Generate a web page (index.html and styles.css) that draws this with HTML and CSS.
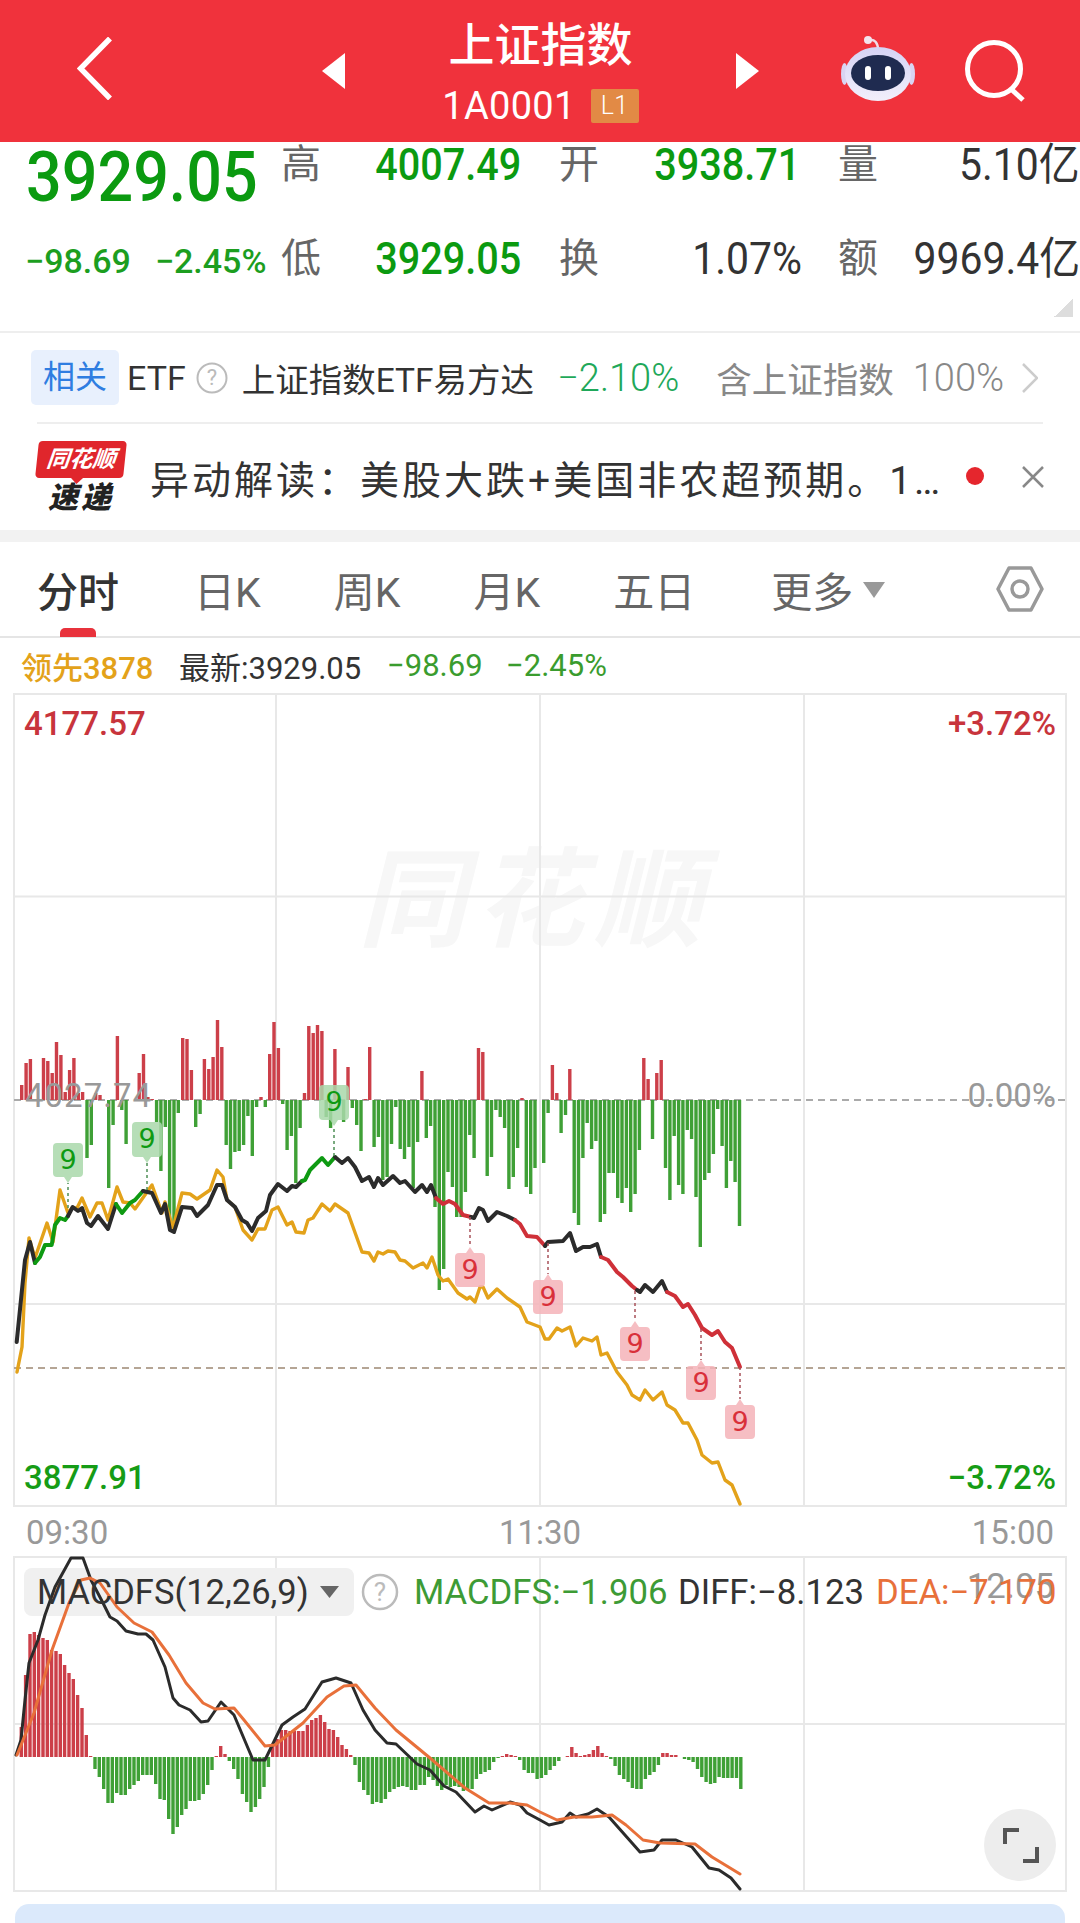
FILE: index.html
```html
<!DOCTYPE html>
<html lang="zh-CN">
<head>
    <meta charset="UTF-8">
    <title>上证指数</title>
    <link rel="stylesheet" href="styles.css">
</head>
<body>
    <!-- 顶部红色导航 -->
    <div class="header">
        <svg class="back" width="35" height="63" viewBox="0 0 35 63">
            <path d="M33 1.500 L3.500 31.500 L33 61.500" fill="none" stroke="#fff" stroke-width="5.500"/>
        </svg>
        <svg class="arrow-prev" width="23" height="36" viewBox="0 0 23 36"><path d="M23 0V36L0 18Z" fill="#fff"/></svg>
        <div class="title-box">
            <div class="title">上证指数</div>
            <div class="code">1A0001<span class="level">L1</span></div>
        </div>
        <svg class="arrow-next" width="23" height="36" viewBox="0 0 23 36"><path d="M0 0V36L23 18Z" fill="#fff"/></svg>
        <svg class="robot" width="74" height="66" viewBox="0 0 74 66">
            <defs>
                <linearGradient id="robotHead" x1="0" y1="0" x2="0" y2="1">
                    <stop offset="0" stop-color="#d5d3f5"/>
                    <stop offset="1" stop-color="#f2effb"/>
                </linearGradient>
            </defs>
            <path d="M28 4 C34 3 37 7 37 14" fill="none" stroke="#f0dce8" stroke-width="2.500"/>
            <circle cx="27" cy="4" r="4" fill="#f3e4ee"/>
            <ellipse cx="3.500" cy="38" rx="3.500" ry="11" fill="#d9d4f2"/>
            <ellipse cx="70.500" cy="38" rx="3.500" ry="11" fill="#d9d4f2"/>
            <ellipse cx="37" cy="38" rx="33" ry="27" fill="url(#robotHead)"/>
            <ellipse cx="37" cy="37" rx="27" ry="18" fill="#1f2b50"/>
            <rect x="24" y="30" width="6" height="14" rx="3" fill="#fff"/>
            <rect x="44" y="30" width="6" height="14" rx="3" fill="#fff"/>
        </svg>
        <svg class="search" width="60" height="62" viewBox="0 0 60 62">
            <circle cx="29" cy="29" r="26.500" fill="none" stroke="#fff" stroke-width="5"/>
            <path d="M46 49 L58 60" stroke="#fff" stroke-width="5"/>
        </svg>
    </div>

    <!-- 行情数据 -->
    <div class="quote">
        <div class="quote-left">
            <div class="price"><span class="narrow-left">3929.05</span></div>
            <div class="change"><span>−98.69</span><span>−2.45%</span></div>
        </div>
        <div class="stats">
            <div class="stat"><span class="label">高</span><span class="value green">4007.49</span></div>
            <div class="stat"><span class="label">开</span><span class="value green">3938.71</span></div>
            <div class="stat"><span class="label">量</span><span class="value">5.10亿</span></div>
            <div class="stat"><span class="label">低</span><span class="value green">3929.05</span></div>
            <div class="stat"><span class="label">换</span><span class="value">1.07%</span></div>
            <div class="stat"><span class="label">额</span><span class="value">9969.4亿</span></div>
        </div>
        <div class="corner"></div>
    </div>

    <!-- 相关ETF -->
    <div class="etf-row">
        <span class="etf-tag">相关</span>
        <span class="etf-name">ETF</span>
        <svg class="etf-help" width="32" height="32" viewBox="0 0 32 32">
            <circle cx="16" cy="16" r="14.500" fill="none" stroke="#bbb" stroke-width="2"/>
            <text x="16" y="23" text-anchor="middle" class="help-mark">?</text>
        </svg>
        <span class="etf-fund">上证指数ETF易方达</span>
        <span class="etf-rate">−2.10%</span>
        <span class="etf-hold">含上证指数</span>
        <span class="etf-pct">100%</span>
        <svg class="etf-more" width="16" height="30" viewBox="0 0 16 30"><path d="M1 1 L15 15 L1 29" fill="none" stroke="#ccc" stroke-width="2.500"/></svg>
    </div>

    <!-- 异动解读 -->
    <div class="news-row">
        <div class="logo">
            <div class="logo-tag"><span>同花顺</span></div>
            <div class="logo-sub">速递</div>
        </div>
        <div class="news-text">异动解读：美股大跌+美国非农超预期。1…</div>
        <span class="news-dot"></span>
        <svg class="news-close" width="22" height="22" viewBox="0 0 22 22"><path d="M1 1 L21 21 M21 1 L1 21" stroke="#888" stroke-width="2.500"/></svg>
    </div>

    <div class="band"></div>

    <!-- 分时 / K线 切换 -->
    <div class="tabs">
        <span class="tab active">分时</span>
        <span class="tab">日K</span>
        <span class="tab">周K</span>
        <span class="tab">月K</span>
        <span class="tab">五日</span>
        <span class="tab tab-more">更多<i class="caret"></i></span>
        <svg class="tab-set" width="48" height="48" viewBox="0 0 48 48">
            <path d="M2 24 L13 3 H35 L46 24 L35 45 H13 Z" fill="none" stroke="#999" stroke-width="3.500" stroke-linejoin="round"/>
            <circle cx="24" cy="24" r="8" fill="none" stroke="#999" stroke-width="3.500"/>
        </svg>
    </div>

    <div class="legend">
        <span class="lead">领先3878</span>
        <span class="latest">最新:3929.05</span>
        <span class="legend-num">−98.69</span>
        <span class="legend-num">−2.45%</span>
    </div>

    <!-- 分时图 -->
    <svg class="chart-main" width="1080" height="814" viewBox="0 693 1080 814">
        <text x="535" y="938" text-anchor="middle" class="watermark">同花顺</text>
        <g class="grid">
            <rect x="14" y="694" width="1052" height="812" fill="none"/>
            <path d="M14 896.500H1066M14 1304H1066M276 694V1506M540 694V1506M804 694V1506"/>
        </g>
        <path class="zero-line" d="M14 1100H1066"/>
        <path class="last-line" d="M14 1368H1066"/>
        <g id="mainBars"></g>
        <g id="mainLines"></g>
        <g id="marks"></g>
        <text x="24" y="735" class="axis red">4177.57</text>
        <text x="1056" y="735" text-anchor="end" class="axis red">+3.72%</text>
        <text x="25" y="1107" class="axis gray wide">4027.74</text>
        <text x="1056" y="1107" text-anchor="end" class="axis gray">0.00%</text>
        <text x="24" y="1489" class="axis green">3877.91</text>
        <text x="1056" y="1489" text-anchor="end" class="axis green">−3.72%</text>
    </svg>

    <div class="times">
        <span>09:30</span>
        <span>11:30</span>
        <span>15:00</span>
    </div>

    <!-- MACDFS 副图 -->
    <svg class="chart-macd" width="1080" height="336" viewBox="0 1556 1080 336">
        <g class="grid">
            <rect x="14" y="1557" width="1052" height="334" fill="none"/>
            <path d="M14 1724H1066M276 1557V1891M540 1557V1891M804 1557V1891"/>
        </g>
        <rect x="24" y="1568" width="330" height="48" rx="8" fill="#f0f0f0"/>
        <g id="macdBars"></g>
        <g id="macdLines"></g>
        <text x="37" y="1604" class="macd-text macd-name">MACDFS(12,26,9)</text>
        <path d="M320 1586H339L329.500 1598Z" fill="#666"/>
        <circle cx="380" cy="1592" r="17" fill="#fff" stroke="#bbb" stroke-width="2.500"/>
        <text x="380" y="1601" text-anchor="middle" class="help-mark big">?</text>
        <text x="414" y="1604" class="macd-text macd-green">MACDFS:−1.906</text>
        <text x="678" y="1604" class="macd-text">DIFF:−8.123</text>
        <text x="1054" y="1598" text-anchor="end" class="macd-text gray">12.05</text>
        <text x="876" y="1604" class="macd-text macd-orange">DEA:−7.170</text>
        <circle cx="1020" cy="1845" r="36" fill="#ededed"/>
        <path d="M1005 1844V1830H1019M1037 1847V1861H1023" fill="none" stroke="#555" stroke-width="4"/>
    </svg>

    <div class="bottom-tip"></div>

    <script src="chart.js"></script>
</body>
</html>
```

FILE: styles.css
```css
* {
    margin: 0;
    padding: 0;
    box-sizing: border-box;
}

html, body {
    width: 1080px;
    height: 1923px;
    overflow: hidden;
    background-color: #fff;
}

body {
    font-family: Roboto, "Noto Sans CJK SC", sans-serif;
    color: #333;
}

svg {
    display: block;
    flex: none;
}

/* 顶部导航 */
.header {
    height: 142px;
    padding-left: 77px;
    background-color: #f0323c;
    color: #fff;
    display: flex;
    align-items: center;
}

.back {
    margin-top: -5px;
}

.arrow-prev {
    margin-left: 210px;
}

.title-box {
    width: 391px;
    display: flex;
    flex-direction: column;
    align-items: center;
}

.title {
    height: 62px;
    font-size: 46px;
    line-height: 62px;
    font-weight: 500;
}

.code {
    height: 46px;
    margin-top: 7px;
    font-size: 38px;
    line-height: 46px;
    letter-spacing: .3px;
    display: flex;
    align-items: center;
}

.level {
    width: 48px;
    height: 34px;
    margin-left: 15px;
    background-color: #e28a45;
    border-radius: 2px;
    font-size: 25px;
    font-weight: 300;
    line-height: 34px;
    text-align: center;
}

.robot {
    margin-left: 82px;
    margin-top: -5px;
}

.search {
    margin-left: 50px;
    margin-top: 0;
}

/* 行情数据 */
.quote {
    position: relative;
    height: 189px;
    padding-left: 27px;
    display: flex;
}

.quote-left {
    width: 254px;
}

.price {
    height: 52px;
    margin-top: 9px;
    margin-left: -1px;
    font-size: 71px;
    line-height: 52px;
    font-weight: 500;
    color: #0b9a10;
}

.narrow-left {
    display: inline-block;
    transform: scaleX(.885);
    transform-origin: left center;
}

.change {
    margin-top: 35px;
    margin-left: -2px;
    display: flex;
    gap: 24px;
    height: 46px;
    font-size: 34px;
    font-weight: 500;
    line-height: 46px;
    color: #1c9e1f;
}

.stats {
    width: 797px;
    display: grid;
    grid-template-columns: 240px 241px 240px;
    grid-auto-rows: 46px;
    column-gap: 38px;
    row-gap: 48px;
}

.stat {
    display: flex;
    justify-content: space-between;
    align-items: center;
}

.label {
    font-size: 40px;
    line-height: 46px;
    color: #666;
}

.value {
    margin-right: -2px;
    font-size: 44px;
    line-height: 46px;
    color: #333;
    transform: scaleX(.93);
    transform-origin: right center;
}

.value.green {
    margin-right: 0;
    color: #0b9a10;
    font-weight: 500;
    transform: scaleX(.9);
}

.corner {
    position: absolute;
    right: 7px;
    top: 156px;
    width: 19px;
    height: 19px;
    background: linear-gradient(135deg, transparent 50%, #ddd 50%);
}

/* 相关ETF */
.etf-row {
    height: 91px;
    padding-left: 31px;
    border-top: 2px solid #eee;
    display: flex;
    align-items: center;
}

.etf-tag {
    width: 88px;
    height: 55px;
    background-color: #e8f0fd;
    border-radius: 5px;
    font-size: 32px;
    line-height: 55px;
    text-align: center;
    color: #2f7de1;
}

.etf-name {
    margin-left: 8px;
    font-size: 34px;
    color: #333;
}

.etf-help {
    margin-left: 10px;
}

.help-mark {
    font-family: Roboto, sans-serif;
    font-size: 22px;
    fill: #bbb;
}

.help-mark.big {
    font-size: 26px;
}

.etf-fund {
    margin-left: 14px;
    font-size: 33.500px;
    color: #333;
    white-space: nowrap;
}

.etf-rate {
    margin-left: 23px;
    font-size: 38px;
    font-weight: 300;
    color: #1fa85a;
}

.etf-hold {
    margin-left: 37px;
    font-size: 35.500px;
    color: #888;
}

.etf-pct {
    margin-left: 19px;
    font-size: 38px;
    font-weight: 300;
    color: #888;
}

.etf-more {
    margin-left: 18px;
}

/* 异动解读 */
.news-row {
    height: 108px;
    margin: 0 37px;
    border-top: 2px solid #eee;
    display: flex;
    align-items: center;
}

.logo {
    width: 88px;
    flex: none;
}

.logo-tag {
    position: relative;
    height: 37px;
    background-color: #e0262c;
    border-radius: 4px;
    transform: skewX(-6deg);
    text-align: center;
    font-size: 23px;
    line-height: 37px;
    font-weight: 700;
    font-style: italic;
    color: #fff;
}

.logo-tag::after {
    content: "";
    position: absolute;
    left: 36px;
    top: 37px;
    border-left: 6px solid transparent;
    border-right: 6px solid transparent;
    border-top: 6px solid #e0262c;
}

.logo-sub {
    height: 32px;
    margin-top: 4px;
    font-size: 30px;
    line-height: 32px;
    font-weight: 900;
    font-style: italic;
    text-align: center;
    letter-spacing: 3px;
    color: #222;
}

.news-text {
    width: 790px;
    margin-left: 25px;
    font-size: 39px;
    letter-spacing: 3px;
    white-space: nowrap;
    color: #333;
}

.news-dot {
    flex: none;
    width: 18px;
    height: 18px;
    margin-left: 26px;
    margin-top: -2px;
    background-color: #e5262d;
    border-radius: 50%;
}

.news-close {
    margin-left: 38px;
}

.band {
    height: 12px;
    background-color: #f2f2f2;
}

/* 切换栏 */
.tabs {
    height: 96px;
    padding: 0 36px 0 37px;
    border-bottom: 2px solid #e5e5e5;
    display: flex;
    align-items: center;
    gap: 73px;
    font-size: 41px;
    color: #666;
}

.tab {
    position: relative;
    white-space: nowrap;
}

.tab.active {
    margin-right: 2px;
    color: #333;
    font-weight: 500;
}

.tab.active::after {
    content: "";
    position: absolute;
    left: 23px;
    bottom: -18px;
    width: 36px;
    height: 9px;
    background-color: #e8323c;
    border-radius: 5px 5px 0 0;
}

.tab-more {
    margin-left: 3px;
}

.caret {
    display: inline-block;
    margin-left: 10px;
    vertical-align: 9px;
    border-left: 11px solid transparent;
    border-right: 11px solid transparent;
    border-top: 16px solid #999;
}

.tab-set {
    margin-left: auto;
}

.legend {
    height: 55px;
    padding-left: 21px;
    display: flex;
    align-items: center;
    font-size: 31px;
    white-space: nowrap;
}

.lead {
    color: #e3a21a;
    font-weight: 500;
    width: 158px;
}

.latest {
    width: 208px;
    color: #333;
}

.legend-num {
    width: 119px;
    color: #3a9c2e;
}

/* 图表 */
.grid {
    stroke: #e8e8e8;
    stroke-width: 2;
}

.zero-line {
    stroke: #aaa;
    stroke-width: 2;
    stroke-dasharray: 7 5;
}

.last-line {
    stroke: #b5a595;
    stroke-width: 2;
    stroke-dasharray: 7 5;
}

.watermark {
    font-size: 108px;
    font-weight: 700;
    font-style: italic;
    letter-spacing: 10px;
    fill: #f7f7f7;
}

.axis {
    font-size: 33px;
    font-weight: 500;
}

.axis.red {
    fill: #c8343c;
}

.axis.green {
    fill: #169c16;
}

.axis.gray {
    fill: #999;
    font-weight: 400;
}

.axis.wide {
    letter-spacing: 1px;
}

.mark-num {
    font-family: "DejaVu Sans", sans-serif;
    font-size: 27px;
}

.times {
    height: 49px;
    padding: 2px 26px 0;
    display: flex;
    justify-content: space-between;
    align-items: center;
    font-size: 33px;
    color: #999;
}

.macd-text {
    font-size: 34.700px;
    fill: #333;
}

.macd-name {
    font-size: 34.500px;
}

.macd-text.gray {
    fill: #999;
}

.macd-text.macd-green {
    fill: #3d9b35;
}

.macd-text.macd-orange {
    fill: #e8703a;
}

.bottom-tip {
    height: 19px;
    margin: 12px 15px 0;
    background-color: #dbe9fb;
    border-radius: 14px 14px 0 0;
}
```

FILE: chart.js
```javascript
const NS = 'http://www.w3.org/2000/svg';

function make(parent, tag, attrs) {
    let el = document.createElementNS(NS, tag);
    for (let key in attrs) {
        el.setAttribute(key, attrs[key]);
    }
    parent.appendChild(el);
    return el;
}

// 柱状：正数红，负数绿
function drawBars(id, values, baseY, startX, endX) {
    let group = document.getElementById(id);
    let step = (endX - startX) / (values.length - 1);
    let red = '';
    let green = '';
    values.forEach(function(v, i) {
        if (v == 0) return;
        let seg = 'M' + (startX + step * i).toFixed(1) + ' ' + baseY + 'V' + (baseY - v);
        if (v > 0) red += seg; else green += seg;
    });
    make(group, 'path', { d: red, stroke: '#cc3f49', 'stroke-width': 3.4, fill: 'none' });
    make(group, 'path', { d: green, stroke: '#3fa036', 'stroke-width': 3.4, fill: 'none' });
}

function drawLine(id, pts, color, width) {
    make(document.getElementById(id), 'polyline', {
        points: pts,
        fill: 'none',
        stroke: color,
        'stroke-width': width,
        'stroke-linejoin': 'round',
        'stroke-linecap': 'round'
    });
}

// 分时图量能柱
let mainBars = [15,37,41,0,0,42,39,27,58,45,8,30,42,7,8,-58,-45,7,5,0,-88,-25,64,-10,-44,0,0,27,46,3,1,-22,-71,-27,-125,-130,-13,62,61,30,-27,-14,41,31,43,80,53,-45,-69,-52,-51,-45,-16,-56,-7,3,-7,46,78,52,-4,-50,-36,-83,-28,7,74,67,75,69,-17,-28,51,0,-22,33,-8,-25,-51,1,53,-47,-37,-80,-77,-44,-7,
    -49,-59,-47,-88,-42,29,-38,-26,-107,-190,-169,-72,-87,-117,-117,-92,-35,-58,52,48,-76,-57,-10,-17,-28,-89,-77,-48,2,-87,-94,-68,0,-63,-13,35,7,-33,-15,31,-113,-125,-58,-23,-49,-41,-122,-114,-73,-73,-98,-103,-88,-112,-94,-50,42,21,-39,27,40,-68,-100,-36,-85,-94,-30,-39,-97,-147,-80,-73,-54,-9,-46,-88,-61,-82,-126];
drawBars('mainBars', mainBars, 1100, 21.7, 739.5);

// 领先指标（黄线）
drawLine('mainLines', '17,1372 22,1347 25,1283 29,1238 35,1258 47,1223 53,1242 60,1190 68,1213 72,1208 77,1208 82,1198 90,1217 97,1203 102,1203 108,1220 117,1187 123,1202 130,1203 135,1209 152,1185 162,1213 165,1202 173,1228 182,1193 190,1194 197,1199 210,1190 217,1170 223,1177 227,1200 235,1207 243,1230 252,1240 258,1229 265,1229 272,1210 278,1207 287,1225 292,1222 296,1232 304,1233 308,1220 313,1218 322,1204 330,1211 335,1204 348,1213 362,1252 369,1253 374,1261 378,1252 383,1254 388,1251 395,1252 400,1260 405,1261 413,1268 423,1263 427,1268 432,1257 438,1275 443,1281 448,1279 458,1293 467,1299 470,1297 475,1302 480,1287 483,1287 488,1298 497,1289 507,1298 520,1307 527,1322 540,1327 545,1339 549,1339 557,1328 562,1331 570,1327 576,1346 583,1338 592,1341 597,1337 601,1355 607,1353 617,1372 627,1385 632,1395 640,1400 645,1390 653,1400 662,1392 667,1405 675,1410 683,1423 688,1423 697,1440 702,1455 712,1463 718,1462 725,1480 732,1485 740,1504', '#e3a21a', 3.400);

// 价格线：黑色为主，九转段落用绿/红
const BLACK = '#2b2b2b', GREEN = '#0e9a12', RED = '#cf3038';
drawLine('mainLines', '16.700,1342 25,1260 30,1242 35,1263', BLACK, 4);
drawLine('mainLines', '35,1263 40,1257 45,1245 51.700,1245 55,1225 60,1218 65,1220 68,1216', GREEN, 4);
drawLine('mainLines', '68,1216 72.700,1207 78,1211 82,1208 87,1223 91,1226 98,1216 108,1229 116,1204', BLACK, 4);
drawLine('mainLines', '116,1204 122,1213 130,1203 135,1200 143,1191', GREEN, 4);
drawLine('mainLines', '143,1191 152,1193 161,1213 165,1204 170,1230 174,1232 182,1207 192,1208 197,1216 208,1205 217,1185 222,1185 227,1200 235,1207 242,1220 247,1223 252,1231 258,1218 266,1211 270,1195 278,1184 287,1191 292,1186 296,1187 302,1181', BLACK, 4);
drawLine('mainLines', '302,1181 305,1180 310,1170 322,1158 328,1165 335,1157', GREEN, 4);
drawLine('mainLines', '335,1157 342,1163 348,1158 355,1167 362,1181 369,1177 374,1187 378,1178 383,1185 393,1176 400,1183 405,1181 415,1192 422,1185 427,1192 431,1185 436,1198', BLACK, 4);
drawLine('mainLines', '436,1198 443,1204 449,1201 455,1204 463,1215 471,1217', RED, 4);
drawLine('mainLines', '471,1217 474,1218 479,1208 483,1210 488,1221 497,1212 507,1216 515,1220', BLACK, 4);
drawLine('mainLines', '515,1220 520,1224 527,1236 537,1237 545,1246', RED, 4);
drawLine('mainLines', '545,1246 548,1242 563,1241 570,1233 576,1251 583,1247 590,1247 597,1244 601,1257', BLACK, 4);
drawLine('mainLines', '601,1257 608,1260 617,1272 623,1277 632,1286 637,1290', RED, 4);
drawLine('mainLines', '637,1290 640,1292 645,1285 653,1292 662,1281 667,1292', BLACK, 4);
drawLine('mainLines', '667,1292 675,1296 683,1307 688,1304 695,1315 702,1328 712,1335 718,1331 725,1342 732,1348 740,1367', RED, 4);

// 九转标记：绿色在线上方，红色在线下方
function drawMark(cx, top, bottom, lineEnd, up) {
    let group = document.getElementById('marks');
    let color = up ? '#0e9a12' : '#d9303a';
    let fill = up ? '#a9d8aa' : '#f4b3b8';
    make(group, 'path', {
        d: 'M' + cx + ' ' + lineEnd + 'V' + (up ? bottom : top),
        stroke: up ? '#4d8f55' : '#a8525a',
        'stroke-width': 1.5,
        'stroke-dasharray': '3 3'
    });
    let d;
    if (up) {
        d = 'M' + (cx - 15) + ' ' + (top + 4) + 'q0 -4 4 -4h22q4 0 4 4v' + (bottom - top - 14) + 'q0 4 -4 4h-7l-4 6l-4 -6h-7q-4 0 -4 -4z';
    } else {
        d = 'M' + (cx - 15) + ' ' + (top + 10) + 'q0 -4 4 -4h7l4 -6l4 6h7q4 0 4 4v' + (bottom - top - 14) + 'q0 4 -4 4h-22q-4 0 -4 -4z';
    }
    make(group, 'path', { d: d, fill: fill, opacity: 0.85 });
    let num = make(group, 'text', {
        x: cx,
        y: up ? (top + 26) : (top + 32),
        'text-anchor': 'middle',
        fill: color,
        class: 'mark-num'
    });
    num.textContent = '9';
}

drawMark(68, 1143, 1183, 1208, true);
drawMark(147, 1122, 1163, 1190, true);
drawMark(334, 1085, 1126, 1156, true);
drawMark(470, 1247, 1287, 1217, false);
drawMark(548, 1274, 1314, 1243, false);
drawMark(635, 1321, 1361, 1291, false);
drawMark(701, 1360, 1400, 1329, false);
drawMark(740, 1399, 1439, 1367, false);

// MACDFS 柱
let macdBars = [30,82,123,125,122,119,117,107,106,103,92,84,78,62,49,22,1,
    -12,-20,-32,-46,-46,-36,-38,-38,-32,-28,-24,-18,-18,-18,-27,-42,-43,-62,-77,-70,-58,-52,-44,-44,-43,-37,-28,-13,
    1,11,3,
    -4,-12,-22,-37,-45,-55,-50,-42,-30,-10,
    11,18,27,27,26,26,26,26,32,37,39,42,35,28,27,20,12,8,2,
    -8,-25,-33,-38,-47,-45,-46,-42,-35,-32,-30,-29,-30,-33,-33,-28,-28,-20,-23,-29,-33,-28,-30,-29,-30,-34,-33,-32,-22,-17,-15,-13,-5,-1,
    1,3,2,1,
    -3,-13,-16,-16,-22,-21,-18,-13,-9,-4,0,
    1,10,4,1,2,3,7,11,4,1,
    -2,-9,-18,-22,-25,-31,-32,-32,-22,-18,-15,-8,
    4,4,2,2,0,
    -2,-3,-5,-12,-20,-25,-27,-26,-20,-21,-21,-21,-21,-32];
drawBars('macdBars', macdBars, 1757, 21.3, 740.8);

drawLine('macdLines', '16,1755 21,1740 25,1700 29,1663 38,1640 45,1615 55,1587 71,1558 83,1558 91,1580 103,1603 110,1617 117,1621 126,1631 138,1634 146,1634 153,1640 165,1667 173,1698 179,1705 190,1710 201,1722 208,1721 221,1702 234,1715 253,1760 265,1760 282,1725 293,1717 305,1709 322,1682 336,1678 351,1683 363,1710 375,1730 387,1743 396,1744 417,1764 430,1770 444,1786 456,1792 475,1812 484,1806 492,1810 510,1802 520,1805 527,1813 540,1820 549,1825 562,1822 570,1813 576,1817 588,1814 597,1809 609,1817 640,1852 654,1850 662,1840 676,1840 692,1847 709,1868 719,1870 731,1878 740,1889', '#2b2b2b', 3);
drawLine('macdLines', '17,1755 34,1713 52,1650 69,1603 81,1580 90,1578 100,1583 117,1607 134,1623 152,1632 169,1655 186,1683 203,1703 215,1709 234,1708 244,1720 265,1746 275,1745 303,1723 327,1697 344,1686 356,1685 375,1708 396,1730 430,1758 465,1788 489,1803 510,1803 527,1805 540,1812 557,1820 574,1817 592,1817 612,1815 626,1825 643,1840 660,1843 695,1844 712,1857 740,1874', '#e8703a', 3);
```
